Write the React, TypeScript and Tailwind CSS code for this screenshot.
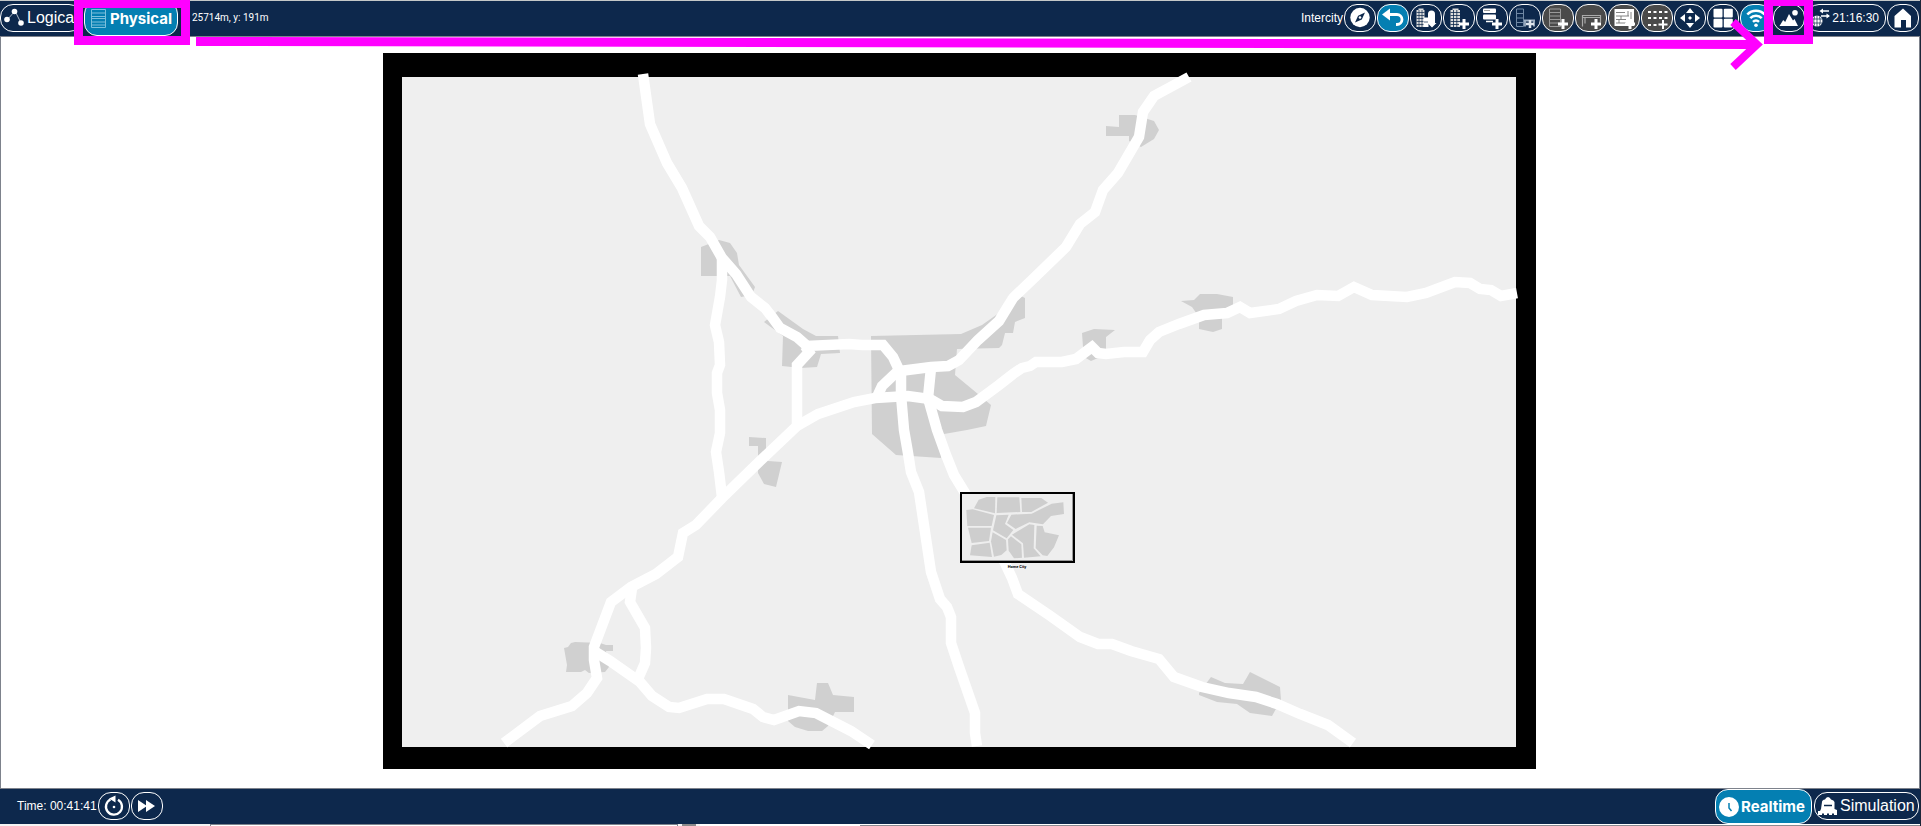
import type { ReactNode } from "react";

const NAVY = "#0d284c";

const ROADS = [
  "643,74 650,124 667,163 682,188 699,226 710,237 722,258 736,274 751,297 765,308 772,317 780,328 797,337 807,346 849,344 862,345 883,345 893,357 900,372",
  "900,371 931,367 948,366 959,360 978,340 999,321 1013,298 1034,278 1066,247 1080,224 1095,212 1103,190 1118,173 1139,137 1143,112 1154,96 1189,77",
  "722,257 722,280 720,297 715,325 719,342 720,365 717,373 717,393 720,410 720,433 716,452 719,472 722,497",
  "805,346 809,352 797,365 797,425",
  "504,743 540,716 572,706 587,693 597,678 594,660 594,647 611,602 631,587 656,574 678,557 683,533 696,525 722,498 760,461 797,426 818,414 854,402 875,398 908,396 930,399 942,406 963,407 976,402 999,385 1013,374 1022,368 1030,366 1036,362 1062,362 1076,359 1092,347 1098,353 1106,354 1124,352 1143,352 1150,340 1159,332 1179,324 1204,315 1227,313 1240,307 1250,313 1279,309 1296,301 1317,295 1338,296 1354,287 1372,295 1407,297 1426,293 1455,282 1470,283 1480,289 1491,290 1501,296 1517,293",
  "900,369 882,386 877,397",
  "901,372 901,395 904,430 908,453 911,472 919,492 931,572 940,599 947,607 951,617 951,643 959,667 975,713 975,733 977,746",
  "931,368 928,398 937,430 946,455 954,475 965,493 1005,563 1012,578 1018,594 1049,615 1080,637 1098,644 1112,644 1131,651 1159,659 1174,677 1202,687 1229,693 1256,697 1277,704 1300,714 1328,725 1353,743",
  "632,588 630,602 645,628 646,648 645,663 638,679",
  "594,651 610,661 640,682 652,696 669,707 679,708 707,699 724,699 753,709 763,717 774,720 799,711 816,713 851,731 872,745",
];

const TOWNS = [
  "701,247 719,240 730,243 737,253 739,265 755,287 752,295 741,297 730,276 701,276",
  "764,322 778,311 803,329 816,336 838,336 840,353 821,354 817,367 801,368 782,366 783,336",
  "871,336 961,334 982,325 999,313 1009,295 1013,292 1025,298 1025,318 1015,322 1013,333 1005,333 1002,345 999,348 957,349 955,375 978,394 991,405 986,426 967,430 944,434 941,458 896,455 872,434",
  "1106,126 1119,127 1119,115 1135,115 1154,121 1159,130 1154,139 1141,147 1129,141 1129,136 1106,136",
  "1082,333 1094,329 1115,330 1106,337 1106,350 1098,358 1091,361 1084,357 1083,347",
  "1181,301 1194,300 1200,294 1217,294 1233,297 1233,308 1222,317 1222,329 1213,332 1199,329 1199,317 1192,307",
  "749,437 766,438 766,450 768,461 782,462 776,487 764,484 758,473 758,446 749,446",
  "564,648 568,647 571,643 575,642 600,643 606,645 613,645 613,651 606,651 609,667 605,672 589,673 585,670 581,672 566,672 567,665",
  "788,695 815,700 817,683 828,683 833,695 854,697 854,712 835,712 828,726 822,731 808,731 795,727 788,721",
  "1199,693 1211,677 1225,683 1243,684 1250,672 1280,687 1281,700 1272,716 1250,713 1237,704 1217,702 1199,695",
];

const CITY_BLOCKS = [
  "102,115 116,89 140,81 166,81 165,130",
  "172,82 238,82 241,126 170,129",
  "244,84 304,84 324,98 274,126 246,126",
  "79,120 98,118 162,135 155,168 82,168",
  "84,173 153,173 147,213 95,219",
  "95,226 149,218 156,261 90,256",
  "169,136 206,134 195,162 220,180 200,205 159,181",
  "214,134 275,131 335,101 370,97 372,132 333,138 309,163 268,157 227,177 201,159",
  "158,187 198,210 200,241 184,255 162,260 153,214",
  "204,208 213,199 244,223 246,263 222,265 206,242",
  "216,194 268,163 283,165 281,235 302,259 252,263 249,220",
  "290,167 308,168 314,187 357,196 342,232 322,258 308,256 287,234",
];

function Plus({ x = 21, y = 20 }: { x?: number; y?: number }) {
  return <path d={`M${x - 5} ${y}h10M${x} ${y - 5}v10`} stroke="#fff" strokeWidth="3" fill="none" />;
}

const TOOLS: { name: string; tone: string; art: ReactNode }[] = [
  {
    name: "Navigation",
    tone: "bg-[#0d284c]",
    art: (
      <>
        <circle cx="16" cy="13.5" r="9.7" fill="#fff" />
        <path d="M21 8.5l-3.2 7L11 18.6l3.1-6.9z" fill={NAVY} />
        <circle cx="16" cy="13.5" r="1.3" fill="#fff" />
      </>
    ),
  },
  {
    name: "Back",
    tone: "bg-[#047fb2]",
    art: (
      <>
        <path d="M11 10.5h9a5 5 0 0 1 0 10h-1" fill="none" stroke="#fff" strokeWidth="2.8" />
        <path d="M5 10.5l8-6v12z" fill="#fff" />
      </>
    ),
  },
  {
    name: "Move object",
    tone: "bg-[#0d284c]",
    art: (
      <>
        <path d="M6.500 6h2V4.500h5V6h1v17h-8z" fill="#ddd" />
        <path d="M6.500 8.500h8M6.500 11.500h8M6.500 14.500h8M6.500 17.500h8M6.500 20.500h8M9 6v17M12 6v17" stroke={NAVY} strokeWidth=".7" />
        <path d="M13.500 13.500h5v9.500h-5z" fill="#fff" />
        <path d="M14 18h4" stroke={NAVY} strokeWidth=".7" />
        <path d="M18 10q0-3.500 3.500-3.500T25 10v9h1.500L22 23.500 17.500 19h.5z" fill="#fff" />
      </>
    ),
  },
  {
    name: "New city or building",
    tone: "bg-[#0d284c]",
    art: (
      <>
        <path d="M7.500 6h2V4.500h6V6H17v17H7.500z" fill="#ddd" />
        <path d="M7.500 8.500H17M7.500 11.500H17M7.500 14.500H17M7.500 17.500H17M7.500 20.500H17M10.500 6v17M13.800 6v17" stroke={NAVY} strokeWidth=".8" />
        <Plus />
      </>
    ),
  },
  {
    name: "New closet",
    tone: "bg-[#0d284c]",
    art: (
      <>
        <rect x="7" y="4.500" width="13" height="4.500" rx="1" fill="#fff" />
        <rect x="7" y="10.500" width="13" height="5" rx="1" fill="#fff" />
        <path d="M8 6.500h6" stroke="#888" strokeWidth=".8" />
        <path d="M10 17.500h7" stroke="#fff" strokeWidth="1.500" />
        <Plus />
      </>
    ),
  },
  {
    name: "New rack and table",
    tone: "bg-[#0d284c]",
    art: (
      <>
        <path d="M7.500 5h7v17.500h-7zM7.500 9.500h7M7.500 14h7M7.500 18.500h7" fill="none" stroke="#7088a4" />
        <path d="M15 16.500h11M16 16v6.500M25 16v6.500" stroke="#9fb0c4" strokeWidth="1.800" />
        <path d="M17 20h8M21 16v8" stroke="#dde4ec" strokeWidth="2.500" />
      </>
    ),
  },
  {
    name: "New rack",
    tone: "bg-[#4a4a4a]",
    art: (
      <>
        <path d="M7.500 5h11v17.500h-11zM7.500 8.500h11M7.500 12h11M7.500 15.500h11M7.500 19h11" fill="none" stroke="#9a9a9a" />
        <Plus />
      </>
    ),
  },
  {
    name: "New table",
    tone: "bg-[#4a4a4a]",
    art: (
      <>
        <path d="M7.500 22.500v-11h18v7M7 13.500h18.500M10 13.500v6" fill="none" stroke="#aaa" strokeWidth="1.200" />
        <Plus />
      </>
    ),
  },
  {
    name: "New shelf",
    tone: "bg-[#4a4a4a]",
    art: (
      <>
        <path d="M6.500 5H26v17H6.500z" fill="#fff" />
        <path d="M8 8.500h9M8 12h13M8 15.500h10M8 19h10M13 12v3.500M20 7v5M23 8v7M11 15.500V19" stroke="#777" strokeWidth=".9" />
        <Plus x={22} />
      </>
    ),
  },
  {
    name: "Set grid",
    tone: "bg-[#4a4a4a]",
    art: (
      <>
        <path d="M7 8h19.500M7 14h19.500M7 21h11" stroke="#fff" strokeWidth="2" strokeDasharray="3 2.500" />
        <path d="M17.500 20.500h9M22 16v9" stroke="#fff" strokeWidth="2" />
      </>
    ),
  },
  {
    name: "Pan",
    tone: "bg-[#0d284c]",
    art: (
      <>
        <path d="M16 4l4 5h-8zM16 24l4-5h-8zM6 14l5-4v8zM26 14l-5-4v8z" fill="#fff" />
        <path d="M16 12l2 2-2 2-2-2z" fill="#fff" />
      </>
    ),
  },
  {
    name: "Tile view",
    tone: "bg-[#0d284c]",
    art: (
      <g fill="#fff">
        <rect x="6.500" y="4.700" width="9" height="8.700" rx="1" />
        <rect x="16.800" y="4.700" width="9" height="8.700" rx="1" />
        <rect x="6.500" y="14.700" width="9" height="8.700" rx="1" />
        <rect x="16.800" y="14.700" width="9" height="8.700" rx="1" />
      </g>
    ),
  },
  {
    name: "Wireless signals",
    tone: "bg-[#047fb2]",
    art: (
      <>
        <path d="M7.300 10.500a12 12 0 0 1 17.400 0M10.300 14.200a7.800 7.800 0 0 1 11.400 0M13 17.800a4.300 4.300 0 0 1 6 0" fill="none" stroke="#fff" strokeWidth="2.500" />
        <circle cx="16" cy="21.300" r="1.800" fill="#fff" />
      </>
    ),
  },
  {
    name: "Set background",
    tone: "bg-[#0d284c]",
    art: (
      <>
        <path d="M6.500 22l3.700-6 2 2 3.800-8 4 6.500 1.500-1.500L25 22z" fill="#fff" />
        <circle cx="22" cy="8.700" r="2.800" fill="#fff" />
      </>
    ),
  },
];

const ring = "flex h-7 shrink-0 items-center rounded-[13px] border border-white";

function Art({ children }: { children: ReactNode }) {
  return (
    <svg viewBox="1 1 30 26" className="block h-[26px] w-[30px]" aria-hidden="true">
      {children}
    </svg>
  );
}

function TopBar() {
  return (
    <header className="relative flex h-[37px] items-start justify-between border-t border-b border-t-[#c4c8c8] border-b-[#7d828c] bg-[#0d284c] pr-px text-white">
      <div className="flex items-start">
        <button type="button" className={`${ring} mt-[3px] w-[82px] gap-0.5 overflow-hidden pl-0.5`}>
          <svg viewBox="0 0 22 26" className="h-[26px] w-[22px] shrink-0" aria-hidden="true">
            <path d="M4 15l8-9 6 12" fill="none" stroke="#c5ccd6" strokeWidth=".9" />
            <circle cx="4" cy="14.500" r="2.800" fill="#fff" />
            <circle cx="11.500" cy="6.500" r="2.800" fill="#fff" />
            <circle cx="18" cy="18" r="2.800" fill="#fff" />
          </svg>
          <span className="text-base leading-5">Logical</span>
        </button>
        <div className="relative ml-0.5">
          <button
            type="button"
            className="flex h-[35px] w-[94px] items-center gap-1 rounded-[13px] border border-white bg-[#047fb2] pl-1.5 font-[Inter,sans-serif] text-[15px] leading-5 font-bold"
          >
            <svg viewBox="0 0 15 19" className="h-[19px] w-[15px] shrink-0" aria-hidden="true">
              <path d="M.5.5h14v18H.5zM.5 4h14M.5 7.500h14M.5 9.500h14M.5 13h14M.5 16h14" fill="none" stroke="#7cc0dc" />
            </svg>
            Physical
          </button>
          <div className="pointer-events-none absolute -top-px -left-2.5 z-10 h-[45px] w-[116px] border-x-9 border-t-8 border-b-9 border-[#ff00ff]" />
        </div>
        <span className="mt-[9px] ml-3.5 font-[Roboto,sans-serif] text-[10px] leading-4">25714m, y: 191m</span>
      </div>
      <div className="mt-[3px] flex items-center gap-px">
        <span className="text-xs">Intercity</span>
        {TOOLS.map((tool) => (
          <div key={tool.name} className="relative">
            <button type="button" aria-label={tool.name} className={`${ring} w-8 ${tool.tone}`}>
              <Art>{tool.art}</Art>
            </button>
            {tool.name === "Set background" && (
              <div className="pointer-events-none absolute -top-1 -left-[9px] z-10 h-11 w-[49px] border-x-9 border-t-6 border-b-9 border-[#ff00ff]" />
            )}
          </div>
        ))}
        <button type="button" className={`${ring} w-20 justify-end pr-1.5 text-xs`}>
          <svg viewBox="0 0 19 20" className="mr-0.5 h-5 w-[19px]" aria-hidden="true">
            <circle cx="6" cy="13" r="5.500" fill="#fff" />
            <path d="M1 11h10M1 15h10M6 7v12M3.500 8.500q-1.500 4.500 0 9M8.500 8.500q1.500 4.500 0 9" fill="none" stroke={NAVY} strokeWidth=".7" />
            <path d="M10 3h8M10 8h8" stroke="#fff" strokeWidth="1.300" />
            <path d="M12 .5v5L8.500 3zM15.500 5.500v5L19 8z" fill="#fff" />
          </svg>
          21:16:30
        </button>
        <button type="button" aria-label="Home" className={`${ring} w-8`}>
          <Art>
            <path d="M7.500 12L16 4.500l8 7.500v11.500h-5V16h-5v7.500H7.500z" fill="#fff" />
          </Art>
        </button>
      </div>
      <div className="pointer-events-none absolute top-[21px] right-[157px] left-[196px] h-[50px]">
        <svg className="h-full w-full overflow-visible" aria-hidden="true">
          <line x1="0" y1="19.500" x2="99.500%" y2="22.500" stroke="#ff00ff" strokeWidth="9" />
          <svg x="100%" y="0" className="overflow-visible">
            <path d="M-30 0L-6 22.500-30 45" fill="none" stroke="#ff00ff" strokeWidth="8" />
          </svg>
        </svg>
      </div>
    </header>
  );
}

function WorldMap() {
  return (
    <main className="flex min-h-0 flex-1 border-r border-l border-[#7d828c] bg-white">
      <svg viewBox="1 37 1918 751" className="min-h-0 w-full flex-1" role="img" aria-label="Intercity map">
        <rect x="383" y="53" width="1153" height="716" fill="#000" />
        <rect x="402" y="77" width="1114" height="670" fill="#efefef" />
        <g fill="#d0d0d0">
          {TOWNS.map((points) => (
            <polygon key={points} points={points} />
          ))}
        </g>
        <g fill="none" stroke="#fff" strokeWidth="10.500">
          {ROADS.map((points) => (
            <polyline key={points} points={points} />
          ))}
        </g>
        <rect x="961" y="493" width="113" height="69" fill="#eee" stroke="#000" strokeWidth="2" />
        <path d="M1072.500 494v66.500h-110.500" fill="none" stroke="#999" />
        <g fill="#cecece" transform="translate(940 470) scale(.33333)">
          {CITY_BLOCKS.map((points) => (
            <polygon key={points} points={points} />
          ))}
        </g>
        <text x="1017" y="568" textAnchor="middle" className="font-[Roboto,sans-serif] text-[4px] font-bold">
          Home City
        </text>
      </svg>
    </main>
  );
}

function BottomBar() {
  return (
    <footer className="bg-[#f4f4f4]">
      <div className="flex h-9 items-start justify-between border-t border-[#7d828c] bg-[#0d284c] pr-px pl-[17px] text-white">
        <div className="mt-[3px] flex items-center gap-px">
          <span className="text-xs">Time: 00:41:41</span>
          <button type="button" aria-label="Power cycle devices" className={`${ring} w-8`}>
            <Art>
              <path d="M12.500 7.500A8 8 0 1 0 20 7.800" fill="none" stroke="#fff" strokeWidth="2.300" />
              <path d="M11 6.500l6.500-3v7z" fill="#fff" />
              <circle cx="16" cy="15" r="1.300" fill="#fff" />
            </Art>
          </button>
          <button type="button" aria-label="Fast forward time" className={`${ring} w-8`}>
            <Art>
              <path d="M7 8l9 6-9 6zM15 8l9 6-9 6z" fill="#fff" />
            </Art>
          </button>
        </div>
        <div className="flex items-start gap-0.5">
          <button
            type="button"
            className="flex h-[35px] w-[97px] items-center gap-0.5 rounded-[13px] border border-white bg-[#047fb2] pl-[3px] font-[Inter,sans-serif] text-[15px] leading-5 font-bold"
          >
            <svg viewBox="0 0 20 20" className="h-5 w-5 shrink-0" aria-hidden="true">
              <circle cx="10" cy="10" r="10" fill="#fff" />
              <path d="M10 6v5l2.500 3" fill="none" stroke="#047fb2" strokeWidth="1.500" />
            </svg>
            Realtime
          </button>
          <button type="button" className={`${ring} mt-[3px] w-[105px] gap-0.5 pl-[3px]`}>
            <svg viewBox="0 0 20 18" className="h-[18px] w-5 shrink-0" aria-hidden="true">
              <path d="M4 5q0-2 3-2.500Q8 0 10 0t3 2.500Q16 3 16.500 5v7l2.500 1v5h-3v-1.500h-2V18h-3v-1.500H9V18H6v-1.500H4V18H0v-4h2l1-2z" fill="#fff" />
              <path d="M6 8.500h8" stroke={NAVY} strokeWidth="1.500" />
            </svg>
            <span className="text-base leading-5">Simulation</span>
          </button>
        </div>
      </div>
      <div className="flex h-0.5">
        <div className="w-[210px]" />
        <div className="w-[468px] border-t border-r border-l border-[#7d828c] bg-white" />
        <div className="ml-1 w-3.5 bg-[#8a8a8a]" />
        <div className="ml-1 w-40 bg-white" />
        <div className="flex-1 border-b border-[#8a8a90] bg-white" />
      </div>
    </footer>
  );
}

export default function App() {
  return (
    <div className="flex h-screen flex-col overflow-hidden border-r border-[#1d2638] bg-white font-[family-name:Liberation_Sans,Arial,sans-serif]">
      <TopBar />
      <WorldMap />
      <BottomBar />
    </div>
  );
}
